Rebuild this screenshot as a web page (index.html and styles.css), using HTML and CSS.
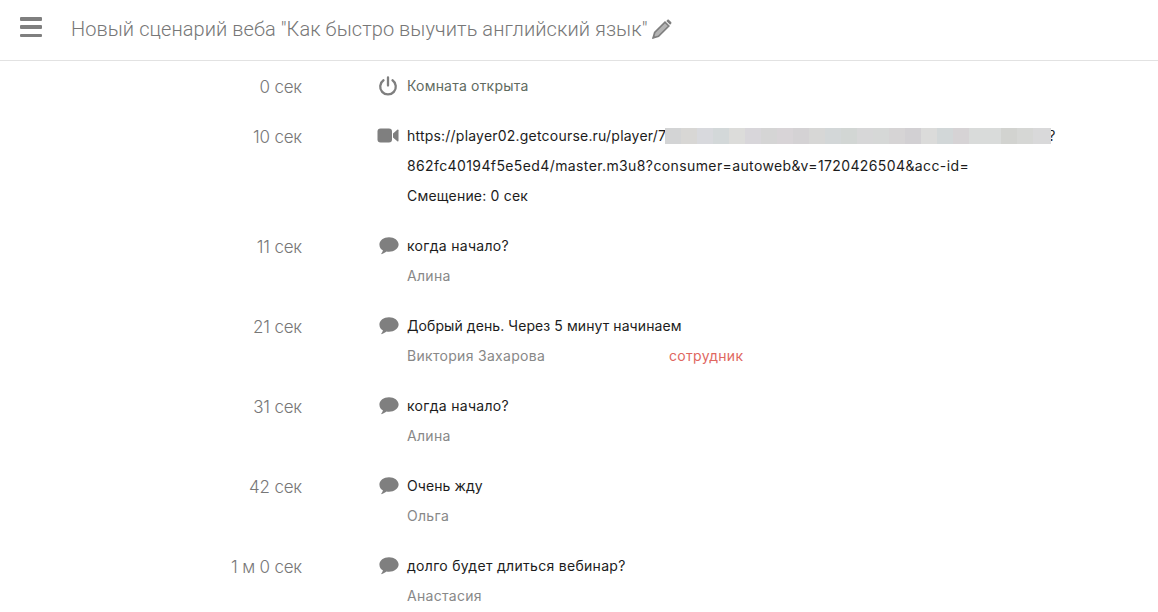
FILE: index.html
```html
<!DOCTYPE html>
<html lang="ru">
<head>
<meta charset="utf-8">
<title>Сценарий</title>
<link rel="stylesheet" href="styles.css">
</head>
<body>
<svg class="defs" width="0" height="0" aria-hidden="true">
  <symbol id="chat" viewBox="0 0 20 18"><path d="M10 .3c5.300 0 9.600 3.200 9.600 7.200s-4.300 7.200-9.600 7.200c-.9 0-1.700-.1-2.500-.2-1.300 1.200-3.200 2.200-5.600 2.700 1-1.100 1.800-2.400 2-3.900C1.900 12.900.4 10.300.4 7.500c0-4 4.300-7.200 9.600-7.200z"/></symbol>
</svg>
<header class="topbar">
  <button class="burger" aria-label="Меню"><span></span><span></span><span></span></button>
  <h1 class="title">Новый сценарий веба "Как быстро выучить английский язык"</h1>
  <svg class="pencil" viewBox="0 0 20 20"><path class="pencil-body" d="M1.200 18.800l1.500-5.300L13 3.200l3.800 3.800L6.500 17.300z"/><path d="M14.300 1.900l1-1c.5-.5 1.200-.5 1.700 0l2.100 2.100c.5.5.5 1.200 0 1.700l-1 1zM.5 19.500l.8-3.500 2.700 2.700z"/></svg>
</header>
<main class="log">
  <div class="row">
    <div class="time">0 сек</div>
    <svg class="icon" viewBox="0 0 20 20"><path class="power" d="M10 1.500v8M5.500 4.300a7.800 7.800 0 1 0 9 0"/></svg>
    <div class="body"><div class="line sys">Комната открыта</div></div>
  </div>
  <div class="row">
    <div class="time">10 сек</div>
    <svg class="icon video" viewBox="0 0 22 15"><rect x="0.500" y="0.500" width="14.500" height="14" rx="3"/><path d="M16 5.500l4.300-3.700c.6-.5 1.200-.2 1.200.5v10.400c0 .7-.6 1-1.200.5L16 9.500z"/></svg>
    <div class="body">
      <div class="line url">https://player02.getcourse.ru/player/7<span class="blur"></span>?</div>
      <div class="line link">862fc40194f5e5ed4/master.m3u8?consumer=autoweb&amp;v=1720426504&amp;acc-id=</div>
      <div class="line mid">Смещение: 0 сек</div>
    </div>
  </div>
  <div class="row">
    <div class="time">11 сек</div>
    <svg class="icon chat"><use href="#chat"/></svg>
    <div class="body"><div class="line">когда начало?</div><div class="line author"><span class="name">Алина</span></div></div>
  </div>
  <div class="row">
    <div class="time">21 сек</div>
    <svg class="icon chat"><use href="#chat"/></svg>
    <div class="body"><div class="line tight">Добрый день. Через 5 минут начинаем</div><div class="line author"><span class="name">Виктория Захарова</span><span class="staff">сотрудник</span></div></div>
  </div>
  <div class="row">
    <div class="time">31 сек</div>
    <svg class="icon chat"><use href="#chat"/></svg>
    <div class="body"><div class="line">когда начало?</div><div class="line author"><span class="name">Алина</span></div></div>
  </div>
  <div class="row">
    <div class="time">42 сек</div>
    <svg class="icon chat"><use href="#chat"/></svg>
    <div class="body"><div class="line tight">Очень жду</div><div class="line author"><span class="name">Ольга</span></div></div>
  </div>
  <div class="row">
    <div class="time">1 м 0 сек</div>
    <svg class="icon chat"><use href="#chat"/></svg>
    <div class="body"><div class="line">долго будет длиться вебинар?</div><div class="line author"><span class="name">Анастасия</span></div></div>
  </div>
</main>
</body>
</html>
```
FILE: styles.css
```css
html, body { margin: 0; padding: 0; height: 100%; overflow: hidden; background: #fff; }
body { font-family: Inter, "Noto Sans", sans-serif; font-size: 14px; color: #1c1c1c; }
.defs { position: absolute; }

.topbar {
  display: flex;
  align-items: center;
  height: 60px;
  border-bottom: 1px solid #e2e2e2;
  padding-left: 20px;
}
.burger {
  display: flex;
  flex-direction: column;
  justify-content: space-between;
  width: 22px;
  height: 20px;
  padding: 0;
  border: 0;
  background: none;
  margin-right: 29px;
  margin-top: -6px;
}
.burger span { display: block; height: 3.500px; background: #7f7f7f; border-radius: 1px; }
.title {
  margin: 0;
  font: 300 20px/1 Roboto, sans-serif;
  letter-spacing: .07px;
  color: #777;
  white-space: nowrap;
  margin-top: -2px;
}
.pencil { width: 20px; height: 20px; fill: #7f7f7f; margin-left: 5px; margin-top: -3px; }
.pencil .pencil-body { fill: #b4b4b4; stroke: #7f7f7f; stroke-width: 1.700; }

.log { padding-top: 10px; }
.row {
  display: grid;
  grid-template-columns: 302px 105px 1fr;
  margin-bottom: 20px;
}
.time {
  box-sizing: border-box;
  height: 30px;
  font: 300 17px/30px Inter, sans-serif;
  letter-spacing: -.2px;
  color: #777;
  text-align: right;
  padding-top: 1px;
}
.icon { margin-left: 75px; margin-top: 5px; width: 22px; height: 20px; fill: #7f7f7f; }
.icon .power { fill: none; stroke: #7f7f7f; stroke-width: 2.300; stroke-linecap: round; }
.icon.video { margin-top: 7px; height: 15px; }
.icon.chat { margin-left: 77px; margin-top: 6px; width: 20px; height: 18px; }
.line { line-height: 30px; white-space: nowrap; letter-spacing: .3px; }
.line.tight { letter-spacing: .08px; }
.line.mid, .line.sys { letter-spacing: .2px; }
.line.url { letter-spacing: .21px; }
.line.link { letter-spacing: .39px; }
.sys { color: #5f6b5f; }
.url { display: flex; align-items: center; }
.blur {
  position: relative;
  width: 386px;
  height: 16px;
  margin-left: -1px;
  margin-right: -3px;
  background: linear-gradient(90deg,
    #d3d4d5 0 16px, #d8d7d5 16px 32px, #d8d9dd 32px 48px, #d3d8d9 48px 64px,
    #dcdcda 64px 80px, #d8d6da 80px 96px, #d5d5d5 96px 112px, #d8d4d7 112px 128px,
    #d4d2d4 128px 144px, #d7d7d6 144px 160px, #d3d7d8 160px 176px, #d2d6d4 176px 192px,
    #d7d7d8 192px 208px, #d6d8d7 208px 224px, #d6d4d5 224px 240px, #d2d0d3 240px 256px,
    #dbdbda 256px 272px, #d2d7d8 272px 288px, #d6d3d5 288px 304px, #d9dbda 304px 336px,
    #d2d3d0 336px 352px, #d6d7d5 352px 368px, #d9d9da 368px 386px);
}
.author { display: flex; }
.name { color: #888; width: 262px; }
.staff { color: #e0675f; }
```
